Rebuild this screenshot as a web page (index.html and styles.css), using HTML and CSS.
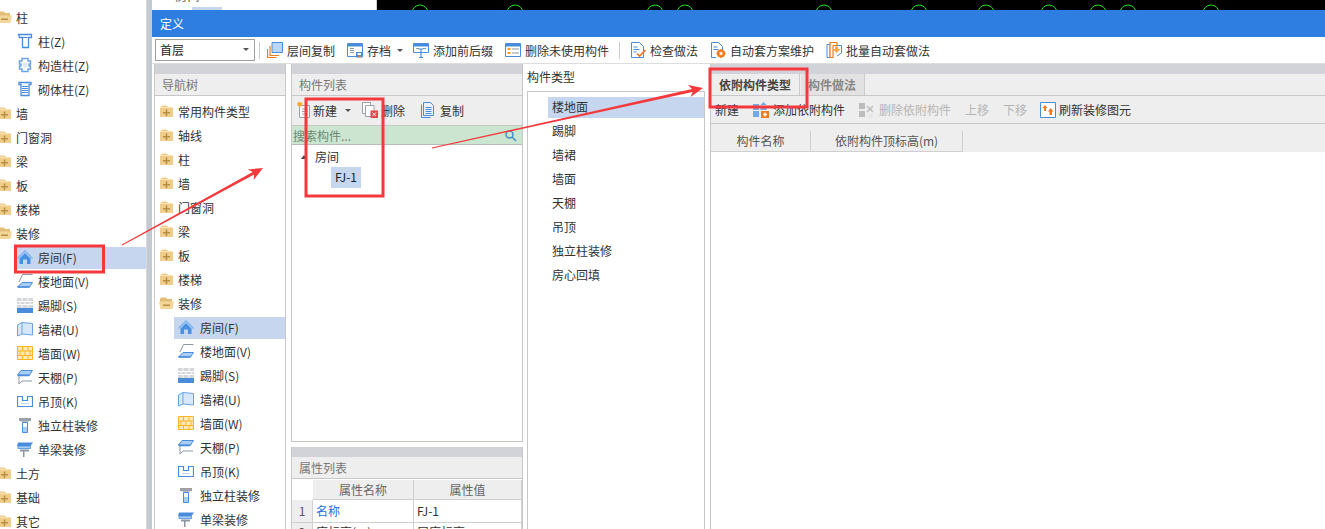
FILE: index.html
```html
<!DOCTYPE html>
<html lang="zh-CN">
<head>
  <meta charset="UTF-8" />
  <title>定义</title>
  <link rel="stylesheet" href="styles.css">
</head>
<body>
  <svg class="defs" aria-hidden="true">
    <symbol id="i-folder" viewBox="0 0 15 16">
      <path d="M1 4h1l1-1.500h5l1 1.500h5v10H1z" fill="#f0cd8b"/>
      <path d="M1 4h13v1H1z" fill="#f7e2b6"/>
      <path d="M4 9h7v1.500H4z" fill="#b98f45"/><path d="M6.700 6.500h1.600v6.500H6.700z" fill="#b98f45"/>
    </symbol>
    <symbol id="i-folder-open" viewBox="0 0 15 16">
      <path d="M1 4l1-1.500h5L8 4h5v3H1z" fill="#e3bd78"/>
      <path d="M0 6.500h15l-1.500 7.500H1.500z" fill="#f3d699"/>
      <path d="M4 9.500h7v1.500H4z" fill="#b98f45"/>
    </symbol>
    <symbol id="i-col" viewBox="0 0 16 16">
      <path d="M1.500 1.500h13v3h-3v10h-6v-10h-3z" fill="#fff" stroke="#4a8cdc" stroke-width="1.300"/>
      <path d="M5.500 4.500h5" stroke="#4a8cdc"/>
    </symbol>
    <symbol id="i-gz" viewBox="0 0 16 16">
      <path d="M5 1.500h6v2.500h2.500v3H12v2h1.500v3H11v2.500H5V12H2.500V9H4V7H2.500V4H5z" fill="#fff" stroke="#6ba3e6" stroke-width="1.400"/>
      <path d="M6 5.500h4v5H6z" fill="#dceafb"/>
    </symbol>
    <symbol id="i-qt" viewBox="0 0 16 16">
      <path d="M2 1.500h12v2h-2v11H4v-11H2z" fill="#fff" stroke="#4a8cdc" stroke-width="1.300"/>
      <path d="M5 5.500h6M5 7.500h6M5 9.500h6M5 11.500h6" stroke="#4a8cdc"/>
    </symbol>
    <symbol id="i-home" viewBox="0 0 16 16">
      <path d="M8 1L0 9l1 1 7-7 7 7 1-1z" fill="#7db3ef"/>
      <path d="M8 4l5.500 5.500V15H10v-4.500H6V15H2.500V9.500z" fill="#4b8fe2"/>
    </symbol>
    <symbol id="i-floor" viewBox="0 0 16 16">
      <path d="M15.500 1.500H5.500L2 9" fill="none" stroke="#8d97a3"/>
      <path d="M5 9.500h10.500l-3 4.500H.5z" fill="#a9cdf5" stroke="#4a8cdc"/>
      <path d="M.5 14h12" stroke="#4a8cdc" stroke-width="1.500"/>
    </symbol>
    <symbol id="i-skirt" viewBox="0 0 16 16">
      <path d="M0 1h16v10H0z" fill="#d4d6d8"/>
      <path d="M0 4.500h16M0 7.500h16M5 1v3.500M11 1v3.500M3 4.500v3M8 4.500v3M13 4.500v3M5 7.500v3M11 7.500v3" stroke="#fff"/>
      <path d="M0 11h16v5H0z" fill="#4a8cdc"/>
    </symbol>
    <symbol id="i-dado" viewBox="0 0 16 16">
      <path d="M.5 4L5 1.500l10.500 1V14L5 13l-4.500 2z" fill="#d8e8fb" stroke="#6ba3e6"/>
      <path d="M5 1.500V13" stroke="#6ba3e6"/>
    </symbol>
    <symbol id="i-wall" viewBox="0 0 16 16">
      <path d="M.5 1.500h15v13H.5z" fill="#fdeab8" stroke="#fab522"/>
      <path d="M1 6h14M1 10.500h14M5.500 2v4M11 2v4M3 6v4.500M8 6v4.500M13 6v4.500M5.500 10.500V14M11 10.500V14" stroke="#fab522"/>
    </symbol>
    <symbol id="i-ceil" viewBox="0 0 16 16">
      <path d="M4 1.500h11.500L12.500 6H.5z" fill="#a9cdf5" stroke="#4a8cdc"/>
      <path d="M.5 6.500h12" stroke="#4a8cdc" stroke-width="1.500"/>
      <path d="M2 7v8M2 15l3-3h10" fill="none" stroke="#8d97a3"/>
    </symbol>
    <symbol id="i-susp" viewBox="0 0 16 16">
      <path d="M.5 3.500h5v4h5v-4h5v10H.5z" fill="#fff" stroke="#4a8cdc" stroke-width="1.200"/>
      <path d="M4 10.500h8" stroke="#bcd6f5"/>
    </symbol>
    <symbol id="i-colfin" viewBox="0 0 16 16">
      <path d="M2 1h12v3H2z" fill="#9aa1a9"/>
      <path d="M4 4h8l-1 1.500H5z" fill="#b8bec5"/>
      <path d="M5.500 5.500h5v10h-5z" fill="#fff" stroke="#4a8cdc"/>
      <path d="M6 10h4v5H6z" fill="#a9cdf5"/>
    </symbol>
    <symbol id="i-beam" viewBox="0 0 16 16">
      <path d="M1 1.500h15L13.500 5H0z" fill="#4a8cdc"/>
      <path d="M1 5h12.500v2.500H1z" fill="#a9cdf5" stroke="#4a8cdc" stroke-width=".8"/>
      <path d="M3 8.500h9v2H7.500v1.500H6V10.500H3z" fill="#8d97a3"/>
      <path d="M6 12h1.500v4H6z" fill="#8d97a3"/>
    </symbol>
    <symbol id="t-copy" viewBox="0 0 16 16">
      <path d="M5 .5h10.500v10H5z" fill="#b7d6f8" stroke="#4a8cdc"/>
      <path d="M3 4v9.500h9M.5 7v8.500h9" fill="none" stroke="#f07c22" stroke-width="1.200"/>
    </symbol>
    <symbol id="t-save" viewBox="0 0 16 16">
      <path d="M.5 1.500h15v13H.5z" fill="#fff" stroke="#4a8cdc"/>
      <path d="M1 2h14v2.500H1z" fill="#4a8cdc"/>
      <path d="M3 6.500h4M3 8.500h4M3 10.500h4" stroke="#8d97a3"/>
      <path d="M9 10h6.500v5.500H9z" fill="#4a8cdc"/><path d="M10.500 11h3.500v2h-3.500z" fill="#fff"/><path d="M11 13.500h2.500v2H11z" fill="#f07c22"/>
    </symbol>
    <symbol id="t-fix" viewBox="0 0 16 16">
      <path d="M.5 1.500h15v9H.5z" fill="#fff" stroke="#4a8cdc"/>
      <path d="M1 2h14v2.500H1z" fill="#4a8cdc"/>
      <path d="M3 6.500h3M10 6.500h3" stroke="#8d97a3"/>
      <path d="M5.500 7h5M8 7v8M6 15.500h4" stroke="#4a8cdc" stroke-width="1.200"/>
    </symbol>
    <symbol id="t-del" viewBox="0 0 16 16">
      <path d="M.5 1.500h15v13H.5z" fill="#fff" stroke="#4a8cdc"/>
      <path d="M1 2h14v2.500H1z" fill="#4a8cdc"/>
      <path d="M2.500 6h3v2h-3zM2.500 10h3v2h-3z" fill="#f0a030"/>
      <path d="M7 7h7M7 11h7" stroke="#8d97a3"/>
    </symbol>
    <symbol id="t-check" viewBox="0 0 16 16">
      <path d="M1.500.5h8l4 4V15.500h-12z" fill="#fff" stroke="#4a8cdc"/>
      <path d="M3.500 5h4M3.500 7.500h6M3.500 10h3" stroke="#4a8cdc"/>
      <path d="M7 11.500l2.500 2.500 6-6" fill="none" stroke="#f07c22" stroke-width="1.600"/>
    </symbol>
    <symbol id="t-gear" viewBox="0 0 16 16">
      <path d="M1.500.5h7l4 4V8M6 15.500H1.500V.5" fill="#fff" stroke="#4a8cdc"/>
      <path d="M3.500 5h4M3.500 7.500h5" stroke="#4a8cdc"/>
      <circle cx="11" cy="11.500" r="3" fill="none" stroke="#f07c22" stroke-width="2.200"/>
      <path d="M11 7v9M6.500 11.500h9" stroke="#f07c22" stroke-width="1.300"/>
      <circle cx="11" cy="11.500" r="1.200" fill="#fff"/>
    </symbol>
    <symbol id="t-batch" viewBox="0 0 16 16">
      <path d="M1 2.500h3v13h-3z" fill="#fff" stroke="#4a8cdc"/>
      <path d="M4 .5h7v3h-4v12H4z" fill="#fff" stroke="#f07c22" stroke-width="1.200"/>
      <path d="M11 3.500h4.500V11l-4.500 3" fill="none" stroke="#4a8cdc"/>
      <path d="M9 4.500h3V7h2.500l-4 4-4-4H9z" fill="#f9a84c"/>
    </symbol>
    <symbol id="t-new" viewBox="0 0 16 16">
      <path d="M2.500 3.500h10v12h-10z" fill="#fff" stroke="#9aa1a9"/>
      <path d="M5 7h6M5 9.500h6M5 12h6" stroke="#9aa1a9"/>
      <path d="M0 2h5.500M2.750 0v5M.8.500l3.900 3.500M4.700.500L.8 4" stroke="#f5a623" stroke-width="1.100"/>
    </symbol>
    <symbol id="t-remove" viewBox="0 0 16 16">
      <path d="M.5.500h8v11h-8z" fill="#fff" stroke="#9aa1a9"/>
      <path d="M3.500 3.500h8.500v11H3.500z" fill="#fff" stroke="#9aa1a9"/>
      <path d="M8.500 8.500H16V16H8.500z" fill="#e0484c"/>
      <path d="M10.500 10.500l3.500 3.500M14 10.500L10.500 14" stroke="#fff"/>
    </symbol>
    <symbol id="t-dup" viewBox="0 0 16 16">
      <path d="M1.500 2.500V15.500h9" fill="none" stroke="#4a8cdc"/>
      <path d="M3.500.5h7l3 3v10h-10z" fill="#eaf3fd" stroke="#4a8cdc"/>
      <path d="M5.500 5.500h6M5.500 7.500h6M5.500 9.500h6M5.500 11.500h6" stroke="#4a8cdc"/>
    </symbol>
    <symbol id="t-add" viewBox="0 0 16 16">
      <path d="M0 2h6v6H0zM0 9h6v6H0z" fill="#74a9e9"/>
      <path d="M10.500 0l3 3h-6zM7.500 4h6v4h-6z" fill="#74a9e9"/>
      <path d="M8 9h8v7H8z" fill="#f07c22"/>
      <path d="M10 12.500h4M12 10.500v4" stroke="#fff" stroke-width="1.300"/>
    </symbol>
    <symbol id="t-rm" viewBox="0 0 16 16">
      <path d="M0 1h6v6H0zM0 9h6v6H0z" fill="#bdbdbd"/>
      <path d="M8 4l6 6M14 4l-6 6" stroke="#bdbdbd" stroke-width="1.500"/>
      <path d="M9 12h5v4H9z" fill="#e8e8e8"/>
    </symbol>
    <symbol id="t-refresh" viewBox="0 0 16 16">
      <path d="M.5.500h15v15H.5z" fill="#fff" stroke="#4a8cdc"/>
      <path d="M5 3l2.500 3H6v3H4V6H2.500z" fill="#f07c22"/>
      <path d="M10.500 6l3 3.500H12V13h-2.500V9.500H8z" fill="#f07c22"/>
    </symbol>
  </svg>

  <div class="desk">
    <aside class="side">
      <div class="row fold"><svg class="fi"><use href="#i-folder-open"/></svg>柱</div>
      <div class="row sub"><svg class="ic"><use href="#i-col"/></svg>柱(Z)</div>
      <div class="row sub"><svg class="ic"><use href="#i-gz"/></svg>构造柱(Z)</div>
      <div class="row sub"><svg class="ic"><use href="#i-qt"/></svg>砌体柱(Z)</div>
      <div class="row fold"><svg class="fi"><use href="#i-folder"/></svg>墙</div>
      <div class="row fold"><svg class="fi"><use href="#i-folder"/></svg>门窗洞</div>
      <div class="row fold"><svg class="fi"><use href="#i-folder"/></svg>梁</div>
      <div class="row fold"><svg class="fi"><use href="#i-folder"/></svg>板</div>
      <div class="row fold"><svg class="fi"><use href="#i-folder"/></svg>楼梯</div>
      <div class="row fold"><svg class="fi"><use href="#i-folder-open"/></svg>装修</div>
      <div class="row sub sel"><svg class="ic"><use href="#i-home"/></svg>房间(F)</div>
      <div class="row sub"><svg class="ic"><use href="#i-floor"/></svg>楼地面(V)</div>
      <div class="row sub"><svg class="ic"><use href="#i-skirt"/></svg>踢脚(S)</div>
      <div class="row sub"><svg class="ic"><use href="#i-dado"/></svg>墙裙(U)</div>
      <div class="row sub"><svg class="ic"><use href="#i-wall"/></svg>墙面(W)</div>
      <div class="row sub"><svg class="ic"><use href="#i-ceil"/></svg>天棚(P)</div>
      <div class="row sub"><svg class="ic"><use href="#i-susp"/></svg>吊顶(K)</div>
      <div class="row sub"><svg class="ic"><use href="#i-colfin"/></svg>独立柱装修</div>
      <div class="row sub"><svg class="ic"><use href="#i-beam"/></svg>单梁装修</div>
      <div class="row fold"><svg class="fi"><use href="#i-folder"/></svg>土方</div>
      <div class="row fold"><svg class="fi"><use href="#i-folder"/></svg>基础</div>
      <div class="row fold"><svg class="fi"><use href="#i-folder"/></svg>其它</div>
    </aside>
    <div class="gutter"></div>
    <div class="back">
      <span class="back-text">房间</span>
      <span class="back-sel"></span>
    </div>
    <div class="cad">
      <svg class="cad-marks" width="948" height="10" fill="none" stroke="#1fe01f">
        <circle cx="43" cy="13" r="8"/><circle cx="138" cy="13" r="8"/>
        <circle cx="278" cy="13" r="8"/><circle cx="308" cy="13" r="8"/>
        <circle cx="447" cy="13" r="8"/><circle cx="542" cy="13" r="8"/>
        <circle cx="609" cy="13" r="8"/><circle cx="672" cy="13" r="8"/>
        <circle cx="721" cy="13" r="8"/><circle cx="751" cy="13" r="8"/>
        <circle cx="834" cy="13" r="8"/>
      </svg>
    </div>
  </div>

  <section class="dialog">
    <div class="titlebar">定义</div>
    <div class="toolbar">
      <div class="combo">首层<i class="caret"></i></div>
      <span class="sep"></span>
      <div class="tb-btn"><svg class="ic"><use href="#t-copy"/></svg>层间复制</div>
      <div class="tb-btn has-caret"><svg class="ic"><use href="#t-save"/></svg>存档<i class="caret"></i></div>
      <div class="tb-btn"><svg class="ic"><use href="#t-fix"/></svg>添加前后缀</div>
      <div class="tb-btn"><svg class="ic"><use href="#t-del"/></svg>删除未使用构件</div>
      <span class="sep"></span>
      <div class="tb-btn"><svg class="ic"><use href="#t-check"/></svg>检查做法</div>
      <div class="tb-btn"><svg class="ic"><use href="#t-gear"/></svg>自动套方案维护</div>
      <div class="tb-btn"><svg class="ic"><use href="#t-batch"/></svg>批量自动套做法</div>
    </div>

    <div class="work">
      <div class="panel nav">
        <div class="band"></div>
        <div class="head">导航树</div>
        <div class="nav-tree">
          <div class="row fold"><svg class="fi"><use href="#i-folder"/></svg>常用构件类型</div>
          <div class="row fold"><svg class="fi"><use href="#i-folder"/></svg>轴线</div>
          <div class="row fold"><svg class="fi"><use href="#i-folder"/></svg>柱</div>
          <div class="row fold"><svg class="fi"><use href="#i-folder"/></svg>墙</div>
          <div class="row fold"><svg class="fi"><use href="#i-folder"/></svg>门窗洞</div>
          <div class="row fold"><svg class="fi"><use href="#i-folder"/></svg>梁</div>
          <div class="row fold"><svg class="fi"><use href="#i-folder"/></svg>板</div>
          <div class="row fold"><svg class="fi"><use href="#i-folder"/></svg>楼梯</div>
          <div class="row fold"><svg class="fi"><use href="#i-folder-open"/></svg>装修</div>
          <div class="row sub sel"><svg class="ic"><use href="#i-home"/></svg>房间(F)</div>
          <div class="row sub"><svg class="ic"><use href="#i-floor"/></svg>楼地面(V)</div>
          <div class="row sub"><svg class="ic"><use href="#i-skirt"/></svg>踢脚(S)</div>
          <div class="row sub"><svg class="ic"><use href="#i-dado"/></svg>墙裙(U)</div>
          <div class="row sub"><svg class="ic"><use href="#i-wall"/></svg>墙面(W)</div>
          <div class="row sub"><svg class="ic"><use href="#i-ceil"/></svg>天棚(P)</div>
          <div class="row sub"><svg class="ic"><use href="#i-susp"/></svg>吊顶(K)</div>
          <div class="row sub"><svg class="ic"><use href="#i-colfin"/></svg>独立柱装修</div>
          <div class="row sub"><svg class="ic"><use href="#i-beam"/></svg>单梁装修</div>
        </div>
      </div>

      <div class="list-col">
        <div class="panel comp">
          <div class="band"></div>
          <div class="head">构件列表</div>
          <div class="tools comp-tools">
            <span class="tool t-new"><svg class="ic"><use href="#t-new"/></svg>新建<i class="caret"></i></span>
            <span class="tool t-remove"><svg class="ic"><use href="#t-remove"/></svg>删除</span>
            <span class="tool t-dup"><svg class="ic"><use href="#t-dup"/></svg>复制</span>
          </div>
          <div class="search">
            <span>搜索构件...</span>
            <svg class="lens" width="13" height="13" viewBox="0 0 13 13" fill="none" stroke="#3f8fc9" stroke-width="1.500"><circle cx="5.500" cy="5.500" r="3.500"/><path d="M8 8l4 4"/></svg>
          </div>
          <div class="comp-tree">
            <div class="node"><i class="tri"></i>房间</div>
            <div class="leaf"><span>FJ-1</span></div>
          </div>
        </div>
        <div class="panel attrs">
          <div class="band"></div>
          <div class="head">属性列表</div>
          <div class="attr-grid">
            <div class="cell corner"></div>
            <div class="cell th">属性名称</div>
            <div class="cell th">属性值</div>
            <div class="cell num">1</div>
            <div class="cell link">名称</div>
            <div class="cell">FJ-1</div>
            <div class="cell num r2">2</div>
            <div class="cell r2">底标高(m)</div>
            <div class="cell r2">层底标高</div>
          </div>
        </div>
      </div>

      <div class="type-col">
        <div class="type-title">构件类型</div>
        <div class="type-list">
          <div class="type sel"><span>楼地面</span></div>
          <div class="type"><span>踢脚</span></div>
          <div class="type"><span>墙裙</span></div>
          <div class="type"><span>墙面</span></div>
          <div class="type"><span>天棚</span></div>
          <div class="type"><span>吊顶</span></div>
          <div class="type"><span>独立柱装修</span></div>
          <div class="type"><span>房心回填</span></div>
        </div>
      </div>

      <div class="panel detail">
        <div class="band"></div>
        <div class="tabs">
          <div class="tab on">依附构件类型</div>
          <div class="tab">构件做法</div>
        </div>
        <div class="tools detail-tools">
          <span class="tool">新建</span>
          <span class="tool"><svg class="ic"><use href="#t-add"/></svg>添加依附构件</span>
          <span class="tool off"><svg class="ic"><use href="#t-rm"/></svg>删除依附构件</span>
          <span class="tool off">上移</span>
          <span class="tool off">下移</span>
          <span class="tool refresh"><svg class="ic"><use href="#t-refresh"/></svg>刷新装修图元</span>
        </div>
        <div class="col-head">
          <div class="col c1">构件名称</div>
          <div class="col c2">依附构件顶标高(m)</div>
        </div>
      </div>
    </div>
  </section>

  <svg class="marks" width="1325" height="529" fill="none" stroke="#f4393c" stroke-width="3">
    <rect x="15.500" y="246" width="88" height="26"/>
    <rect x="306" y="99" width="77" height="97"/>
    <rect x="710" y="69" width="97" height="38"/>
    <g fill="#f4393c" stroke="none">
      <polygon points="121.800,244.600 252.700,172 247.800,169.400 263,168 253.600,180 254.100,174.600 122.200,245.400"/>
      <polygon points="431.900,147.600 692,88.900 688,85.100 703,88 690.600,96.900 692.600,91.900 432.100,148.400"/>
    </g>
  </svg>
</body>
</html>
```

FILE: styles.css
```css
* {
  margin: 0;
  padding: 0;
  box-sizing: border-box;
}

body {
  width: 1325px;
  height: 529px;
  position: relative;
  overflow: hidden;
  background: #fff;
  color: #333;
  font-family: "Noto Sans CJK SC", "Noto Sans", sans-serif;
  font-size: 12px;
}

.defs {
  position: absolute;
  width: 0;
  height: 0;
}

.ic {
  width: 16px;
  height: 16px;
  flex: none;
}

.fi {
  width: 15px;
  height: 16px;
  flex: none;
}

/* what lies behind the dialog */
.desk {
  display: flex;
  height: 529px;
}

.side {
  width: 147px;
  padding-top: 5px;
  border-right: 1px solid #d9d9d9;
  overflow: hidden;
}

.gutter {
  width: 5px;
  background: #c3cad2;
}

.back {
  width: 225px;
  position: relative;
  overflow: hidden;
}

.back-text {
  position: absolute;
  left: 24px;
  top: -13px;
  color: #555;
}

.back-sel {
  position: absolute;
  left: 40px;
  top: 7px;
  width: 30px;
  height: 3px;
  background: #c5d6ee;
}

.cad {
  flex: 1;
  background: #000;
  border-left: 1px solid #ccc;
  height: 529px;
}

.cad-marks {
  display: block;
}

/* trees */
.row {
  display: flex;
  align-items: center;
  height: 22px;
  margin-top: 2px;
  padding-bottom: 2px;
  white-space: nowrap;
}

.fold {
  gap: 4px;
}

.side .fold .fi {
  margin-left: -3px;
}

.side .sub {
  margin-left: 14px;
  padding-left: 3px;
  gap: 5px;
}

.sel {
  background: #c5d6ee;
}

.nav-tree {
  padding-top: 3px;
  background: #fff;
  flex: 1;
}

.nav-tree .fold {
  padding-left: 4px;
}

.nav-tree .sub {
  margin-left: 19px;
  padding-left: 4px;
  gap: 6px;
}

/* dialog */
.dialog {
  position: absolute;
  left: 152px;
  top: 10px;
  width: 1173px;
  height: 519px;
  background: #fff;
  display: flex;
  flex-direction: column;
}

.titlebar {
  height: 27px;
  flex: none;
  padding-left: 8px;
  line-height: 27px;
  background: #2d7ee0;
  color: #fff;
}

.toolbar {
  height: 27px;
  flex: none;
  display: flex;
  align-items: center;
  padding-left: 3px;
  border-bottom: 1px solid #ddd;
}

.combo {
  width: 100px;
  height: 22px;
  position: relative;
  padding-left: 4px;
  line-height: 20px;
  border: 1px solid #a0a0a0;
  color: #222;
}

.combo .caret {
  position: absolute;
  right: 5px;
  top: 8px;
}

.caret {
  display: inline-block;
  width: 0;
  height: 0;
  border-left: 3px solid transparent;
  border-right: 3px solid transparent;
  border-top: 3px solid #555;
}

.sep {
  width: 1px;
  height: 17px;
  margin: 0 4px;
  background: #ccc;
}

.combo + .sep {
  margin-right: 1px;
}

.tb-btn {
  display: flex;
  align-items: center;
  gap: 4px;
  padding: 0 6px;
  white-space: nowrap;
}

.has-caret {
  padding-right: 4px;
}

.has-caret .caret {
  margin-left: 2px;
}

.work {
  flex: 1;
  display: flex;
  min-height: 0;
  padding-left: 2px;
}

.panel {
  display: flex;
  flex-direction: column;
  border-left: 1px solid #c8c8c8;
  border-right: 1px solid #c8c8c8;
  overflow: hidden;
}

.band {
  height: 10px;
  flex: none;
  background: #d2d3d8;
}

.head {
  height: 22px;
  flex: none;
  padding-left: 7px;
  line-height: 21px;
  background: #eee;
  border-bottom: 1px solid #c8c8c8;
  color: #777;
}

.nav {
  width: 132px;
  margin-right: 5px;
}

.list-col {
  width: 232px;
  margin-right: 4px;
  display: flex;
  flex-direction: column;
  gap: 5px;
}

.comp {
  height: 378px;
  flex: none;
  border-bottom: 1px solid #c8c8c8;
}

.tools {
  height: 28px;
  flex: none;
  display: flex;
  align-items: center;
  background: #eee;
  border-bottom: 1px solid #c8c8c8;
  white-space: nowrap;
}

.comp-tools {
  height: 30px;
  padding-bottom: 1px;
}

.tool {
  display: flex;
  align-items: center;
  gap: 4px;
}

.t-new {
  margin-left: 5px;
  gap: 0;
}

.t-new .caret {
  margin-left: 8px;
}

.t-remove {
  margin-left: 11px;
  gap: 3px;
}

.t-dup {
  margin-left: 15px;
  gap: 4px;
}

.search {
  height: 19px;
  flex: none;
  display: flex;
  align-items: center;
  justify-content: space-between;
  padding: 0 5px 0 1px;
  background: #cce5d0;
  border-bottom: 1px solid #bbb;
  color: #6b8a72;
}

.comp-tree {
  flex: 1;
  padding-top: 2px;
}

.node {
  height: 20px;
  line-height: 20px;
  padding-left: 23px;
  position: relative;
}

.tri {
  position: absolute;
  left: 9px;
  top: 8px;
  border-left: 3px solid transparent;
  border-right: 3px solid transparent;
  border-bottom: 4px solid #444;
}

.leaf {
  padding-left: 39px;
}

.leaf span {
  display: inline-block;
  width: 30px;
  height: 21px;
  line-height: 20px;
  padding-left: 4px;
  background: #c5d6ee;
  color: #222;
}

.attrs {
  flex: 1;
}

.attr-grid {
  display: grid;
  grid-template-columns: 21px 101px 1fr;
  grid-template-rows: 20px 23px 22px;
  margin-top: 1px;
  background: #fff;
}

.cell {
  padding-left: 3px;
  line-height: 21px;
  border-right: 1px solid #d0d0d0;
  border-bottom: 1px solid #d0d0d0;
  white-space: nowrap;
  overflow: hidden;
}

.corner {
  border: none;
}

.th {
  padding: 0;
  line-height: 19px;
  text-align: center;
  background: #eee;
  color: #666;
}

.num {
  padding: 0;
  text-align: center;
  background: #eee;
  color: #555;
}

.r2 {
  line-height: 17px;
}

.link {
  color: #2a6fdc;
}

.type-col {
  width: 178px;
  margin-right: 5px;
  display: flex;
  flex-direction: column;
}

.type-title {
  height: 27px;
  line-height: 26px;
  flex: none;
}

.type-list {
  flex: 1;
  padding-top: 5px;
  border: 1px solid #c8c8c8;
  border-bottom: none;
}

.type {
  height: 21px;
  margin-bottom: 3px;
  margin-left: 20px;
  padding-left: 4px;
  line-height: 20px;
}

.type.sel {
  background: #c5d6ee;
}

.detail {
  flex: 1;
  border-right: none;
}

.tabs {
  height: 22px;
  flex: none;
  display: flex;
  align-items: stretch;
  background: #eee;
  border-bottom: 1px solid #c8c8c8;
}

.tab {
  padding: 0 8px 0 7px;
  line-height: 21px;
  background: #e2e2e2;
  color: #888;
  font-weight: 700;
  border-right: 1px solid #ccc;
}

.tab.on {
  padding: 0 8px;
  margin-right: 1px;
  background: #eee;
  color: #444;
}

.detail-tools {
  padding-left: 4px;
  gap: 14px;
}

.refresh {
  margin-left: -1px;
  gap: 3px;
}

.off {
  color: #b5b5b5;
}

.col-head {
  height: 28px;
  flex: none;
  display: flex;
  padding-top: 7px;
  background: #eee;
}

.col {
  height: 21px;
  line-height: 20px;
  text-align: center;
  border-right: 1px solid #d0d0d0;
  border-bottom: 1px solid #d0d0d0;
  color: #555;
}

.c1 {
  width: 100px;
}

.c2 {
  width: 152px;
}

/* red notes drawn on top of the screenshot */
.marks {
  position: absolute;
  left: 0;
  top: 0;
}
```
